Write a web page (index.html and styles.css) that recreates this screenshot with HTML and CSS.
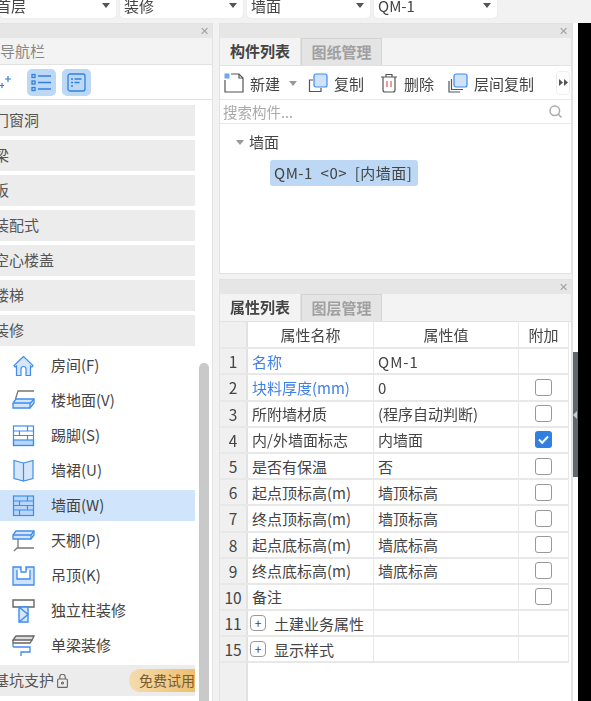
FILE: index.html
```html
<!DOCTYPE html>
<html lang="zh-CN">
<head>
    <meta charset="UTF-8">
    <meta name="viewport" content="width=device-width, initial-scale=1.0">
    <title>构件列表</title>
    <link rel="stylesheet" href="styles.css">
</head>
<body>

<!-- Floor / type selectors -->
<div class="topbar">
    <div class="select select-floor"><span>首层</span><i class="caret"></i></div>
    <div class="select"><span>装修</span><i class="caret"></i></div>
    <div class="select"><span>墙面</span><i class="caret"></i></div>
    <div class="select"><span>QM-1</span><i class="caret"></i></div>
</div>

<div class="workspace">

    <!-- Navigation panel -->
    <div class="panel nav-panel">
        <div class="panel-title"><span class="close">&#10005;</span></div>
        <div class="nav-head">导航栏</div>
        <div class="nav-tools">
            <svg class="sparkle" width="12" height="16" viewBox="0 0 12 16"><path d="M8 1v6M5 4h6M2 8v5M0 10.500h4" fill="none" stroke="#2f80e0" stroke-width="1.200"/></svg>
            <div class="tool-btn">
                <svg width="21" height="21" viewBox="0 0 21 21" fill="none" stroke="#2f80e0" stroke-width="1.300"><rect x="1" y="2.500" width="3" height="3"/><rect x="1" y="9" width="3" height="3"/><rect x="1" y="15.500" width="3" height="3"/><path d="M7 4h13M7 10.500h13M7 17h13"/></svg>
            </div>
            <div class="tool-btn">
                <svg width="19" height="19" viewBox="0 0 19 19" fill="none" stroke="#2f80e0" stroke-width="1.300"><rect x="1" y="1" width="17" height="17" rx="2"/><path d="M4 6h2M7.500 6h7M4 9.500h2M7.500 9.500h5M4 13h2"/></svg>
            </div>
        </div>
        <div class="nav-body">
            <div class="nav-list">
                <div class="nav-group"><span>门窗洞</span></div>
                <div class="nav-group"><span>梁</span></div>
                <div class="nav-group"><span>板</span></div>
                <div class="nav-group"><span>装配式</span></div>
                <div class="nav-group"><span>空心楼盖</span></div>
                <div class="nav-group"><span>楼梯</span></div>
                <div class="nav-group"><span>装修</span></div>
                <div class="nav-item">
                    <svg width="22" height="22" viewBox="0 0 22 22" fill="#d5e6fa" stroke="#3f8cf0" stroke-width="1.200"><path d="M11 1.500 1.500 10.500l1 1.500 1.500-1v9.500h4.500V14a2.500 2.500 0 0 1 5 0v6.500H18V11l1.500 1 1-1.500z"/></svg>
                    <span>房间(F)</span>
                </div>
                <div class="nav-item">
                    <svg width="23" height="22" viewBox="0 0 23 22" fill="none" stroke-width="1.300"><path d="M22 1H6L3.500 9" stroke="#777"/><path d="M4 9h18v4l-4 5H1v-5z" fill="#d5e6fa" stroke="#3f8cf0"/><path d="M1 13h17.500L22 9M18 13v5" stroke="#3f8cf0"/></svg>
                    <span>楼地面(V)</span>
                </div>
                <div class="nav-item">
                    <svg width="22" height="22" viewBox="0 0 22 22" fill="none" stroke="#3f8cf0" stroke-width="1.200"><rect x="1" y="15" width="20" height="5.500" fill="#b9d6f8"/><rect x="1" y="1" width="20" height="19.500"/><path d="M1 6h20M1 10.500h20M7 6v4.500M15 1v5M15 10.500V15"/></svg>
                    <span>踢脚(S)</span>
                </div>
                <div class="nav-item">
                    <svg width="22" height="23" viewBox="0 0 22 23" fill="#d5e6fa" stroke="#3f8cf0" stroke-width="1.200"><path d="M11 4 1.500 1.500v18L11 22zM11 4l9.500-2.500v18L11 22z"/></svg>
                    <span>墙裙(U)</span>
                </div>
                <div class="nav-item">
                    <svg width="22" height="22" viewBox="0 0 22 22" fill="none" stroke="#3f8cf0" stroke-width="1.200"><rect x="1" y="1" width="20" height="19.500" fill="#b9d6f8"/><path d="M1 6h20M1 10.500h20M1 15h20M7 6v4.500M15 1v5M15 10.500V15M7 15v5.500"/></svg>
                    <span>墙面(W)</span>
                </div>
                <div class="nav-item">
                    <svg width="23" height="22" viewBox="0 0 23 22" fill="none" stroke-width="1.300"><path d="M4 1h18v4l-3 4H1V5z" fill="#d5e6fa" stroke="#3f8cf0"/><path d="M1 5h18l3-4M19 5v4" stroke="#3f8cf0"/><path d="M6 9v9M2 21l3-3h17" stroke="#777"/></svg>
                    <span>天棚(P)</span>
                </div>
                <div class="nav-item">
                    <svg width="23" height="20" viewBox="0 0 23 20" stroke="#3f8cf0" stroke-width="1.300"><path d="M1 1h8v5h5V1h8v18H1z" fill="#cfe2fa"/><path d="M5 4v9h13V4" fill="#fff"/><path d="M9 1v5h5V1" fill="#fff"/></svg>
                    <span>吊顶(K)</span>
                </div>
                <div class="nav-item">
                    <svg width="23" height="24" viewBox="0 0 23 24" fill="none" stroke-width="1.400"><path d="M1 1h21v7H1z" stroke="#666"/><path d="M7 8h9v15H7zM7 8l9 7.500L7 23" stroke="#3f8cf0" fill="#d5e6fa"/></svg>
                    <span>独立柱装修</span>
                </div>
                <div class="nav-item">
                    <svg width="23" height="22" viewBox="0 0 23 22" fill="none" stroke-width="1.300"><path d="M4 1h18l-2 4H1z" stroke="#666" fill="#ddd"/><path d="M1 5v3h17l2-3" stroke="#666"/><path d="M1 8v3a1 1 0 0 0 1 1h16v5H9v4" stroke="#3f8cf0"/></svg>
                    <span>单梁装修</span>
                </div>
                <div class="nav-group nav-group-trial">
                    <span>基坑支护</span>
                    <svg class="lock" width="11" height="14" viewBox="0 0 11 14" fill="none" stroke="#666" stroke-width="1.100"><rect x="0.600" y="5" width="9.800" height="8.400" rx="1"/><path d="M2.800 5V3a2.700 2.700 0 0 1 5.400 0v2"/><circle cx="5.500" cy="9" r="1"/></svg>
                    <span class="trial">免费试用</span>
                </div>
            </div>
            <div class="scrollbar"></div>
        </div>
    </div>

    <div class="right-col">

        <!-- Component list -->
        <div class="panel list-panel">
            <div class="panel-title"><span class="close">&#10005;</span></div>
            <div class="tabs">
                <div class="tab active">构件列表</div>
                <div class="tab">图纸管理</div>
            </div>
            <div class="list-tools">
                <div class="tool tool-new">
                    <svg width="20" height="20" viewBox="0 0 20 20" fill="none" stroke="#555" stroke-width="1.200"><path d="M1 7v12h18V5l-4-4H7"/><path d="M15 1v4h4"/><rect x="0.500" y="0.500" width="5" height="5" fill="#6fa8ee" stroke="none"/></svg>
                    <span>新建</span>
                    <i class="caret caret-grey"></i>
                </div>
                <div class="tool tool-copy">
                    <svg width="20" height="20" viewBox="0 0 20 20" fill="none" stroke-width="1.200"><path d="M5 7H1.500v11.500H13V15" stroke="#555"/><rect x="6" y="1" width="13" height="13" rx="2" fill="#cfe2fa" stroke="#3f8cf0"/></svg>
                    <span>复制</span>
                </div>
                <div class="tool tool-del">
                    <svg width="18" height="20" viewBox="0 0 18 20" fill="none" stroke="#555" stroke-width="1.200"><path d="M1 4h16M6 4V1.500h6V4M3 4v13a2 2 0 0 0 2 2h8a2 2 0 0 0 2-2V4"/><path d="M7 8v6M11 8v6" stroke="#e05a5a"/></svg>
                    <span>删除</span>
                </div>
                <div class="tool tool-layer">
                    <svg width="20" height="20" viewBox="0 0 20 20" fill="none" stroke-width="1.200"><path d="M1 8v11h11M3.500 6v10.500H15" stroke="#555"/><rect x="6" y="1" width="13" height="13" rx="2" fill="#cfe2fa" stroke="#3f8cf0"/></svg>
                    <span>层间复制</span>
                </div>
                <div class="more-btn">
                    <svg width="9" height="7" viewBox="0 0 9 7" fill="#555"><path d="M0 0l4 3.500L0 7zM5 0l4 3.500L5 7z"/></svg>
                </div>
            </div>
            <div class="search-row">
                <span>搜索构件...</span>
                <svg width="13" height="13" viewBox="0 0 13 13" fill="none" stroke="#aaa" stroke-width="1.500"><circle cx="5.800" cy="5.800" r="4.800"/><path d="M9.300 9.300 12.500 12.500"/></svg>
            </div>
            <div class="tree">
                <div class="tree-root"><i class="caret caret-grey"></i><span>墙面</span></div>
                <div class="tree-leaf">QM-1&nbsp; &lt;0&gt;&nbsp; [内墙面]</div>
            </div>
        </div>

        <!-- Property list -->
        <div class="panel prop-panel">
            <div class="panel-title"><span class="close">&#10005;</span></div>
            <div class="tabs">
                <div class="tab active">属性列表</div>
                <div class="tab">图层管理</div>
            </div>
            <div class="prop-table">
                <div class="row head"><div class="no"></div><div>属性名称</div><div>属性值</div><div>附加</div></div>
                <div class="row"><div class="no">1</div><div class="link">名称</div><div><span class="wide">QM-1</span></div><div></div></div>
                <div class="row"><div class="no">2</div><div class="link">块料厚度(mm)</div><div>0</div><div><i class="check"></i></div></div>
                <div class="row"><div class="no">3</div><div>所附墙材质</div><div>(程序自动判断)</div><div><i class="check"></i></div></div>
                <div class="row"><div class="no">4</div><div>内/外墙面标志</div><div>内墙面</div><div>
                    <i class="check checked"><svg width="17" height="17" viewBox="0 0 17 17" fill="none" stroke="#fff" stroke-width="2"><path d="M4 8.500l3.200 3.200L13 5.500"/></svg></i>
                </div></div>
                <div class="row"><div class="no">5</div><div>是否有保温</div><div>否</div><div><i class="check"></i></div></div>
                <div class="row"><div class="no">6</div><div>起点顶标高(m)</div><div>墙顶标高</div><div><i class="check"></i></div></div>
                <div class="row"><div class="no">7</div><div>终点顶标高(m)</div><div>墙顶标高</div><div><i class="check"></i></div></div>
                <div class="row"><div class="no">8</div><div>起点底标高(m)</div><div>墙底标高</div><div><i class="check"></i></div></div>
                <div class="row"><div class="no">9</div><div>终点底标高(m)</div><div>墙底标高</div><div><i class="check"></i></div></div>
                <div class="row"><div class="no">10</div><div>备注</div><div></div><div><i class="check"></i></div></div>
                <div class="row"><div class="no">11</div><div><i class="plus">+</i>土建业务属性</div><div></div><div></div></div>
                <div class="row"><div class="no">15</div><div><i class="plus">+</i>显示样式</div><div></div><div></div></div>
                <div class="row-rest"><div class="no"></div></div>
            </div>
        </div>
    </div>

    <!-- Splitter handle and the black area beside it -->
    <div class="splitter"><div class="handle"><i></i></div></div>
    <div class="outside"></div>
</div>

</body>
</html>
```

FILE: styles.css
```css
/* Basic Reset */
* {
    margin: 0;
    padding: 0;
    box-sizing: border-box;
}

html, body {
    height: 701px;
    overflow: hidden;
}

body {
    font-family: "Noto Sans CJK SC", "Noto Sans", sans-serif;
    font-size: 15px;
    color: #444;
    background: #f2f2f2;
    display: flex;
    flex-direction: column;
    filter: blur(0.35px);
}

i {
    font-style: normal;
}

/* Top selectors */
.topbar {
    height: 23px;
    flex: none;
    display: flex;
    gap: 4px;
    overflow: hidden;
}

.select {
    height: 18px;
    background: #fff;
    border-radius: 0 0 4px 4px;
    box-shadow: 0 0 1px #ccc;
    display: flex;
    justify-content: space-between;
    line-height: 12px;
    padding: 0 6px 0 4px;
    flex: 0 0 123px;
}

.select-floor {
    flex-basis: 116px;
    padding-left: 0;
}

.select-floor span {
    margin-left: -4px;
}

.caret {
    width: 0;
    height: 0;
    margin-top: 3px;
    border: 4px solid transparent;
    border-top: 5px solid #555;
    border-bottom: 0;
}

.caret-grey {
    border-top-color: #999;
}

/* Panels */
.workspace {
    flex: 1;
    display: flex;
    min-height: 0;
}

.panel {
    background: #fff;
    border: 1px solid #e2e2e2;
    display: flex;
    flex-direction: column;
}

.panel-title {
    height: 14px;
    flex: none;
    background: #e6e6e6;
    position: relative;
}

.close {
    position: absolute;
    right: 3px;
    top: -1px;
    font-size: 11px;
    line-height: 14px;
    color: #a0a0a0;
}

/* Navigation panel */
.nav-panel {
    width: 213px;
    margin-right: 6px;
    border-left: 0;
    border-bottom: 0;
}

.nav-head {
    height: 27px;
    flex: none;
    line-height: 26px;
    background: #f3f3f3;
    border-bottom: 1px solid #e2e2e2;
    color: #888;
}

.nav-tools {
    height: 35px;
    flex: none;
    display: flex;
    align-items: center;
    gap: 6px;
    padding-top: 1px;
    border-bottom: 1px solid #e2e2e2;
}

.sparkle {
    margin-right: 9px;
}

.tool-btn {
    width: 29px;
    height: 27px;
    background: #bcd8f5;
    border-radius: 5px;
    display: flex;
    align-items: center;
    justify-content: center;
}

.nav-body {
    flex: 1;
    display: flex;
    min-height: 0;
    padding-top: 5px;
    overflow: hidden;
}

.nav-list {
    width: 195px;
    flex: none;
}

.nav-group,
.nav-item {
    height: 31px;
    margin-bottom: 4px;
    display: flex;
    align-items: center;
}

.nav-group {
    background: #ececec;
    color: #555;
    overflow: hidden;
}

.nav-group > span:first-child {
    margin: -2px 0 0 -6px;
}

.nav-item {
    padding-left: 12px;
    gap: 16px;
}

.nav-item svg {
    width: 23px;
    flex: none;
}

.nav-item span {
    margin-top: -2px;
}

.nav-item:nth-child(12) {
    background: #d0e5fb;
}

.lock {
    margin-left: 3px;
    flex: none;
}

.trial {
    margin-left: auto;
    width: 66px;
    height: 23px;
    flex: none;
    line-height: 23px;
    padding-left: 10px;
    font-size: 14px;
    white-space: nowrap;
    color: #7a5a30;
    background: linear-gradient(90deg, #f4dcae, #eebf6f);
    border-radius: 12px 0 0 12px;
}

.scrollbar {
    width: 10px;
    margin: 258px 0 0 4px;
    height: 400px;
    flex: none;
    background: #c9c9c9;
    border-radius: 5px 5px 0 0;
}

/* Right column */
.right-col {
    width: 353px;
    flex: none;
    display: flex;
    flex-direction: column;
    gap: 5px;
}

.list-panel {
    height: 251px;
    flex: none;
}

.prop-panel {
    flex: 1;
    min-height: 0;
    border-bottom: 0;
}

.tabs {
    height: 28px;
    flex: none;
    display: flex;
    background: #f3f3f3;
    border-bottom: 1px solid #e2e2e2;
}

.tab {
    width: 81px;
    text-align: center;
    line-height: 25px;
    color: #a0a0a0;
    background: #e4e4e4;
    border: 1px solid #d4d4d4;
    border-bottom: 0;
    font-weight: 700;
}

.tab.active {
    color: #444;
    background: #f3f3f3;
    border: 0;
    border-right: 1px solid #e2e2e2;
}

/* Component toolbar */
.list-tools {
    height: 34px;
    flex: none;
    display: flex;
    align-items: center;
    padding-left: 4px;
    border-bottom: 1px solid #e8e8e8;
}

.tool {
    display: flex;
    align-items: center;
    gap: 6px;
}

.tool span {
    margin-top: 2px;
}

.tool-new {
    width: 84px;
}

.tool-new .caret {
    margin: 2px 0 0 3px;
}

.tool-copy {
    width: 72px;
}

.tool-del {
    width: 68px;
}

.tool-layer {
    width: 108px;
}

.more-btn {
    width: 14px;
    height: 24px;
    border: 1px solid #eee;
    border-radius: 4px;
    display: flex;
    align-items: center;
    justify-content: center;
}

.search-row {
    height: 24px;
    flex: none;
    display: flex;
    justify-content: space-between;
    align-items: center;
    padding: 0 9px 0 3px;
    color: #aaa;
    font-size: 14.500px;
    border-bottom: 1px solid #e8e8e8;
}

/* Tree */
.tree {
    padding: 5px 0 0 16px;
}

.tree-root {
    display: flex;
    align-items: center;
    gap: 5px;
    height: 24px;
}

.tree-root .caret {
    margin-top: 2px;
}

.tree-leaf {
    width: 148px;
    height: 26px;
    margin: 7px 0 0 34px;
    padding-left: 4px;
    line-height: 26px;
    letter-spacing: 0.5px;
    white-space: nowrap;
    background: #bcd8f5;
    border-radius: 3px;
}

/* Property table */
.prop-table {
    flex: 1;
    display: flex;
    flex-direction: column;
    min-height: 0;
}

.row {
    display: grid;
    grid-template-columns: 28px 126px 145px 50px;
    height: 26.200px;
    flex: none;
    width: 349px;
    border-bottom: 2px solid #e8e8e8;
    background: #fff;
}

.row.head {
    height: 27.200px;
}

.row > div {
    display: flex;
    align-items: center;
    padding-left: 4px;
    border-right: 1px solid #e8e8e8;
    white-space: nowrap;
}

.row > div:last-child {
    justify-content: center;
    padding-left: 0;
}

.row > .no {
    justify-content: center;
    padding-left: 0;
    background: #f0f0f0;
    border-right: 2px solid #e2e2e2;
    font-size: 15.500px;
}

.head > div {
    justify-content: center;
    padding-left: 0;
}

.link {
    color: #3f7fe8;
}

.wide {
    letter-spacing: 1px;
}

.check {
    width: 17px;
    height: 17px;
    border: 1px solid #999;
    border-radius: 3px;
    background: #fff;
}

.checked {
    background: #2f80e0;
    border: 0;
    display: block;
}

.checked svg {
    display: block;
}

.plus {
    width: 16px;
    height: 16px;
    margin: 0 8px 0 -2px;
    border: 1px solid #999;
    border-radius: 4px;
    font-size: 12px;
    line-height: 14px;
    text-align: center;
    flex: none;
}

.row-rest {
    flex: 1;
}

.row-rest .no {
    width: 28px;
    height: 100%;
    background: #f0f0f0;
    border-right: 2px solid #e2e2e2;
}

/* Splitter */
.splitter {
    width: 5.500px;
    flex: none;
    padding-top: 329px;
    background: #fff;
    border-left: 1px solid #e2e2e2;
}

.handle {
    height: 125px;
    background: #5f6870;
    display: flex;
    align-items: center;
}

.handle i {
    border: 4px solid transparent;
    border-right: 4px solid #ccc;
    border-left: 0;
}

.outside {
    flex: 1;
    background: #000;
}
```
